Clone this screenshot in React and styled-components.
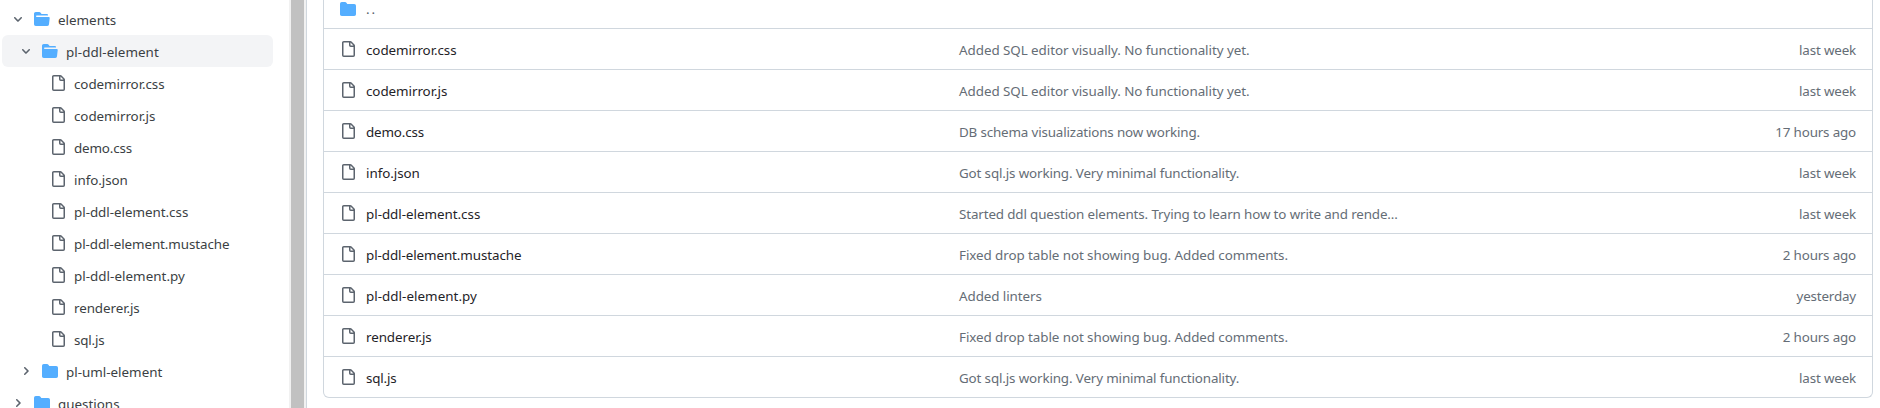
import React from "react";
import styled, { createGlobalStyle } from "styled-components";

const Global = createGlobalStyle`
  *, *::before, *::after { box-sizing: border-box; }
  html, body { margin: 0; background: #fff; overflow: hidden; }
  body {
    font-family: "Noto Sans", "Open Sans", sans-serif;
    font-size: 13.4px;
    line-height: 20px;
    color: #1f2328;
  }
`;

const Page = styled.div`
  display: flex;
  width: 1880px;
  height: 408px;
  overflow: hidden;
`;

const Sidebar = styled.nav`
  flex: 0 0 289px;
  padding: 3px 16px 0 2px;
`;

const TreeRow = styled.div`
  display: flex;
  align-items: center;
  width: 271px;
  height: 32px;
  padding-left: ${(p) => 10 + p.$level * 8}px;
  border-radius: 6px;
  background: ${(p) => (p.$current ? "#f3f4f6" : "transparent")};
  color: #3b3f44;
`;

const Toggle = styled.span`
  display: flex;
  flex: 0 0 22px;
`;

const Label = styled.span`
  padding: 2px 0 0 8px;
  white-space: nowrap;
  letter-spacing: ${(p) => p.$tracking || 0}px;
`;

const Scrollbar = styled.div`
  flex: 0 0 18px;
  background: #f1f1f1;
  border-right: 1px solid #d0d7de;
  padding: 0 2px;
`;

const Thumb = styled.div`
  width: 13px;
  height: 100%;
  background: #c1c1c1;
`;

const Main = styled.main`
  flex: 1;
  padding: 0 7px 10px 16px;
`;

const FileTable = styled.div`
  display: flex;
  flex-direction: column;
  height: 398px;
  border: 1px solid #d0d7de;
  border-top: 0;
  border-radius: 0 0 6px 6px;
`;

const ParentRow = styled.div`
  display: flex;
  align-items: center;
  height: 28px;
  padding: 0 16px 10px;
  color: #57606a;
`;

const ParentLabel = styled.span`
  padding: 0 0 0 10px;
  letter-spacing: 2px;
`;

const FileRow = styled.div`
  display: grid;
  grid-template-columns: 16px 603px 460px 1fr;
  align-items: center;
  height: 41px;
  padding: 0 16px;
  border-top: 1px solid #d0d7de;
`;

const FileName = styled.span`
  padding: 2px 0 0 10px;
  letter-spacing: ${(p) => p.$tracking || 0}px;
`;

const Message = styled.span`
  padding-top: 2px;
  color: #656d76;
  white-space: nowrap;
  letter-spacing: ${(p) => p.$tracking || 0}px;
`;

const Age = styled(Message)`
  text-align: right;
  letter-spacing: -0.17px;
`;

const Glyph = styled.svg`
  display: block;
  flex: none;
  fill: ${(p) => p.$color || "#5c646e"};
`;

const paths = {
  file: "M2 1.75C2 .784 2.784 0 3.75 0h6.586c.464 0 .909.184 1.237.513l2.914 2.914c.329.328.513.773.513 1.237v9.586A1.75 1.75 0 0 1 13.25 16h-9.5A1.75 1.75 0 0 1 2 14.25Zm1.75-.25a.25.25 0 0 0-.25.25v12.5c0 .138.112.25.25.25h9.5a.25.25 0 0 0 .25-.25V6h-2.75A1.75 1.75 0 0 1 9 4.25V1.5Zm6.75.062V4.25c0 .138.112.25.25.25h2.688l-.011-.013-2.914-2.914-.013-.011Z",
  closed: "M1.75 1A1.75 1.75 0 0 0 0 2.75v10.5C0 14.216.784 15 1.75 15h12.5A1.75 1.75 0 0 0 16 13.25v-8.5A1.75 1.75 0 0 0 14.25 3H7.5a.25.25 0 0 1-.2-.1l-.9-1.2C6.07 1.26 5.55 1 5 1H1.75Z",
  open: "M.513 1.513A1.75 1.75 0 0 1 1.75 1h3.5c.55 0 1.07.26 1.4.7l.9 1.2a.25.25 0 0 0 .2.1H13a1 1 0 0 1 1 1v.5H2.75a.75.75 0 0 0 0 1.5h11.978a1 1 0 0 1 .994 1.117L15 13.25A1.75 1.75 0 0 1 13.25 15H1.75A1.75 1.75 0 0 1 0 13.25V2.75c0-.464.184-.91.513-1.237Z",
  down: "M6 8.825c-.2 0-.4-.1-.5-.2l-3.3-3.3c-.3-.3-.3-.8 0-1.1.3-.3.8-.3 1.1 0l2.7 2.7 2.7-2.7c.3-.3.8-.3 1.1 0 .3.3.3.8 0 1.1l-3.2 3.2c-.2.2-.4.3-.6.3Z",
  right: "M4.7 10c-.2 0-.4-.1-.5-.2-.3-.3-.3-.8 0-1.1L6.9 6 4.2 3.3c-.3-.3-.3-.8 0-1.1.3-.3.8-.3 1.1 0l3.3 3.2c.3.3.3.8 0 1.1L5.3 9.7c-.2.2-.4.3-.6.3Z",
};

const Icon = ({ name, size = 16, color }) => (
  <Glyph width={size} height={size} viewBox={`0 0 ${size} ${size}`} $color={color}>
    <path d={paths[name]} />
  </Glyph>
);

// name, commit message, age, letter spacing of the name, letter spacing of the message
const files = [
  ["codemirror.css", "Added SQL editor visually. No functionality yet.", "last week", -0.06, -0.05],
  ["codemirror.js", "Added SQL editor visually. No functionality yet.", "last week", -0.06, -0.05],
  ["demo.css", "DB schema visualizations now working.", "17 hours ago", -0.16, -0.16],
  ["info.json", "Got sql.js working. Very minimal functionality.", "last week", -0.05, -0.14],
  ["pl-ddl-element.css", "Started ddl question elements. Trying to learn how to write and rende...", "last week", -0.03, -0.135],
  ["pl-ddl-element.mustache", "Fixed drop table not showing bug. Added comments.", "2 hours ago", -0.08, -0.07],
  ["pl-ddl-element.py", "Added linters", "yesterday", 0.03, -0.08],
  ["renderer.js", "Fixed drop table not showing bug. Added comments.", "2 hours ago", -0.08, -0.07],
  ["sql.js", "Got sql.js working. Very minimal functionality.", "last week", -0.2, -0.14],
];

const Folder = ({ name, level, open, current }) => (
  <TreeRow $level={level} $current={current}>
    <Toggle><Icon name={open ? "down" : "right"} size={12} /></Toggle>
    <Icon name={open ? "open" : "closed"} color="#54aeff" />
    <Label $tracking={open && level ? 0.06 : 0}>{name}</Label>
  </TreeRow>
);

export default function App() {
  return (
    <>
      <Global />
      <Page>
        <Sidebar>
          <Folder name="elements" level={0} open />
          <Folder name="pl-ddl-element" level={1} open current />
          {files.map(([name, , , tracking]) => (
            <TreeRow key={name} $level={2}>
              <Toggle />
              <Icon name="file" />
              <Label $tracking={tracking}>{name}</Label>
            </TreeRow>
          ))}
          <Folder name="pl-uml-element" level={1} />
          <Folder name="questions" level={0} />
        </Sidebar>
        <Scrollbar><Thumb /></Scrollbar>
        <Main>
          <FileTable>
            <ParentRow>
              <Icon name="closed" color="#54aeff" />
              <ParentLabel>..</ParentLabel>
            </ParentRow>
            {files.map(([name, message, age, nameTracking, messageTracking]) => (
              <FileRow key={name}>
                <Icon name="file" />
                <FileName $tracking={nameTracking}>{name}</FileName>
                <Message $tracking={messageTracking}>{message}</Message>
                <Age>{age}</Age>
              </FileRow>
            ))}
          </FileTable>
        </Main>
      </Page>
    </>
  );
}
